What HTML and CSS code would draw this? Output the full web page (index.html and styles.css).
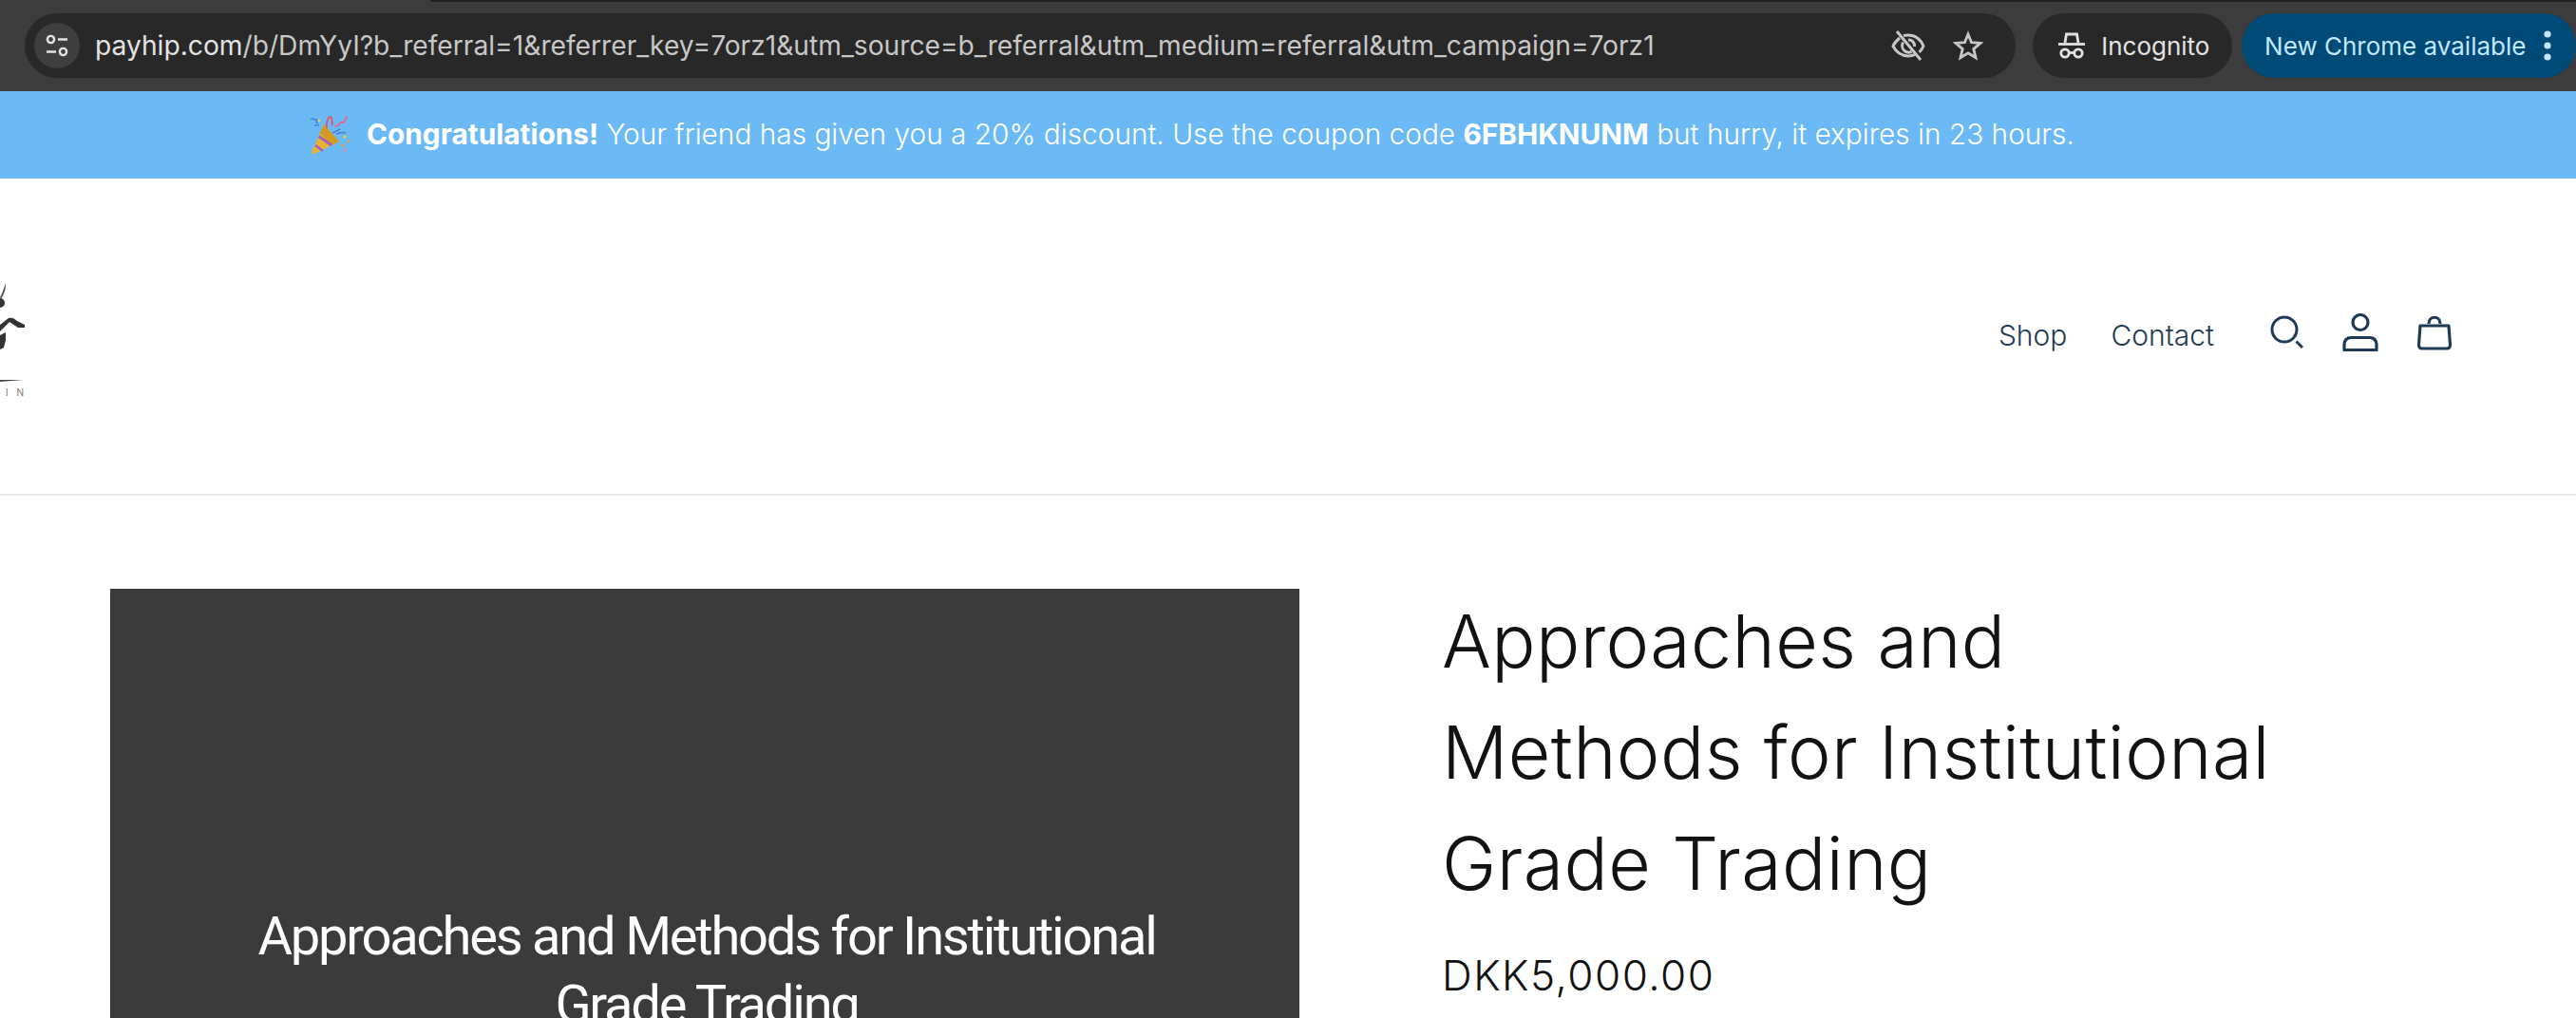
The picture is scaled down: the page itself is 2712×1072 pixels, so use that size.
FILE: index.html
```html
<!DOCTYPE html>
<html lang="en">
<head>
  <meta charset="UTF-8">
  <title>Approaches and Methods for Institutional Grade Trading</title>
  <link rel="stylesheet" href="styles.css">
</head>
<body>
  <div class="browser-bar">
    <div class="address-pill">
      <span class="tune-button">
        <svg width="28" height="28" viewBox="0 0 28 28" fill="none" stroke="#e3e3e3" stroke-width="2.4">
          <circle cx="7.5" cy="7.5" r="3.6"/>
          <path d="M15 7.5h10M3 20.500h10"/>
          <circle cx="20.500" cy="20.500" r="3.6"/>
        </svg>
      </span>
      <div class="url"><span class="url-host">payhip.com</span>/b/DmYyI?b_referral=1&amp;referrer_key=7orz1&amp;utm_source=b_referral&amp;utm_medium=referral&amp;utm_campaign=7orz1</div>
      <svg class="eye-icon" width="38" height="38" viewBox="0 0 38 38" fill="none" stroke="#c7c7c7" stroke-width="3">
        <path d="M10 11C6.500 14 4 17 3 19.500c3 6 9 10.500 16 10.500 3 0 5.500-.7 8-2"/>
        <path d="M14 8.500c1.600-.4 3.300-.6 5-.6 7 0 13 4.500 16 11.600-1 2.500-2.500 4.600-4.500 6.500"/>
        <path d="M13.500 15.500c-1.500 3-1 7 1.500 9s5 2 7.500 1M19 13c4-.3 7 3 6.500 7"/>
        <path d="M7 4l25 30"/>
      </svg>
      <svg class="star-icon" width="32" height="32" viewBox="0 0 36 36" fill="none" stroke="#c7c7c7" stroke-width="3.200" stroke-linejoin="miter">
        <path d="M18 4.500l4 9.800 10.600.8-8.100 6.900 2.500 10.300-9-5.500-9 5.500 2.500-10.300-8.100-6.900 10.600-.8z"/>
      </svg>
    </div>
    <div class="incognito-pill">
      <svg width="30" height="30" viewBox="0 0 30 30" fill="none" stroke="#e3e3e3" stroke-width="2.800">
        <path d="M8 12l1.500-9h11l1.500 9"/>
        <path d="M1 13.500h28"/>
        <circle cx="8" cy="23" r="4.200"/>
        <circle cx="22" cy="23" r="4.200"/>
        <path d="M12 22.500h6"/>
      </svg>
      <span>Incognito</span>
    </div>
    <div class="update-pill">
      <span>New Chrome available</span>
      <svg width="10" height="32" viewBox="0 0 10 32" fill="#c2e7ff">
        <circle cx="5" cy="4" r="3.600"/>
        <circle cx="5" cy="16" r="3.600"/>
        <circle cx="5" cy="28" r="3.600"/>
      </svg>
    </div>
  </div>

  <div class="promo-banner">
    <svg class="popper" width="44" height="44" viewBox="0 0 44 44">
      <path d="M15 11L31 29 5 42c-2 1-3-1-2.500-3z" fill="#e6b433"/>
      <path d="M15 11L31 29 22 33.500 11 20z" fill="#d39b22"/>
      <path d="M9.500 23.500L23 33M6 33l8 6" stroke="#a45fc4" stroke-width="2.800" fill="none"/>
      <path d="M1 6c3-3 4 1 6 0s-2 3 2 4M5 12l5 0" stroke="#4a7fe0" stroke-width="1.500" fill="none"/>
      <path d="M18 15c-1-8 2-12 4-12s1 5 2 9" stroke="#e4526f" stroke-width="1.800" fill="none"/>
      <path d="M27 14c1-4 3 0 4-3s1-2 4-2 2-6 5-6" stroke="#e8648c" stroke-width="1.800" fill="none"/>
      <path d="M24 20l8-4M28 21c3-1 6-2 10-1" stroke="#4a7fe0" stroke-width="1.800" fill="none"/>
      <circle cx="37" cy="24" r="1.500" fill="#f3d34a"/>
      <circle cx="35" cy="33" r="1.500" fill="#e8a33d"/>
      <circle cx="41" cy="29" r="1.400" fill="#e8a33d"/>
      <circle cx="37" cy="38" r="1.500" fill="#e78ac0"/>
      <circle cx="10" cy="7" r="1.300" fill="#f3d34a"/>
    </svg>
    <p class="promo-text"><strong>Congratulations!</strong> Your friend has given you a 20% discount. Use the coupon code <strong>6FBHKNUNM</strong> but hurry, it expires in 23 hours.</p>
  </div>

  <header class="site-header">
    <svg class="logo" width="28" height="126" viewBox="0 0 28 126">
      <path d="M0 18C3 13 4 8 6 3 6 9 5 14 1 20z" fill="#555"/>
      <circle cx="0" cy="24" r="5" fill="#333"/>
      <path d="M0 47L9 40c3-1 6 0 9 3l8 4 0 3-7 0-9-6L0 54z" fill="#333"/>
      <path d="M0 58l6-3 0 8-2 8-4 2z" fill="#333"/>
      <path d="M0 105h25l-25 2z" fill="#444"/>
      <text class="logo-text" x="6" y="122">I N</text>
    </svg>
    <nav class="site-nav">
      <a class="nav-link" href="#">Shop</a>
      <a class="nav-link" href="#">Contact</a>
      <div class="nav-icons">
        <svg width="36" height="36" viewBox="0 0 36 36" fill="none" stroke="#1f3a56" stroke-width="3">
          <circle cx="15" cy="15" r="13"/>
          <path d="M27.500 27.500l6.500 6.500"/>
        </svg>
        <svg width="38" height="40" viewBox="0 0 38 40" fill="none" stroke="#1f3a56" stroke-width="3.200">
          <circle cx="19" cy="9.500" r="8"/>
          <path d="M2 38.500v-6c0-4 3-7 7-7h20c4 0 7 3 7 7v6z" stroke-linejoin="round"/>
        </svg>
        <svg width="38" height="38" viewBox="0 0 38 38" fill="none" stroke="#1f3a56" stroke-width="3.200">
          <path d="M4 12h30l1.500 20c.1 2.500-1 4-3.500 4H6c-2.500 0-3.600-1.500-3.500-4z" stroke-linejoin="round"/>
          <path d="M13 10c0-9 12-9 12 0"/>
        </svg>
      </div>
    </nav>
  </header>

  <main class="product">
    <div class="product-cover">
      <div class="cover-title">Approaches and Methods for Institutional<br>Grade Trading</div>
    </div>
    <div class="product-info">
      <h1 class="product-title">Approaches and<br>Methods for Institutional<br>Grade Trading</h1>
      <div class="product-price">DKK5,000.00</div>
    </div>
  </main>
</body>
</html>
```
FILE: styles.css
```css
html, body {
  height: 1072px;
  overflow: hidden;
}

body {
  margin: 0;
  background-color: #fff;
  font-family: 'Inter', 'Open Sans', sans-serif;
  font-weight: 300;
}

/* browser chrome */
.browser-bar {
  display: flex;
  align-items: center;
  gap: 18px;
  height: 96px;
  box-sizing: border-box;
  padding: 14px 0 14px 26px;
  background-color: #3c3c3c;
  font-size: 26px;
  font-weight: 400;
  background-image: linear-gradient(#232323, #232323);
  background-repeat: no-repeat;
  background-size: calc(100% - 453px) 2px;
  background-position: right top;
}

.address-pill {
  display: flex;
  align-items: center;
  width: 2097px;
  height: 68px;
  box-sizing: border-box;
  padding: 0 0 0 10px;
  border-radius: 34px;
  background-color: #282828;
  color: #c7c7c7;
}

.tune-button {
  display: flex;
  align-items: center;
  justify-content: center;
  width: 48px;
  height: 48px;
  border-radius: 50%;
  background-color: #3f3f3f;
}

.url {
  flex: 1;
  margin-left: 16px;
  font-size: 28.2px;
  white-space: nowrap;
}

.url-host {
  color: #e3e3e3;
}

.eye-icon {
  margin-right: 28px;
}

.star-icon {
  margin-right: 34px;
}

.incognito-pill {
  display: flex;
  align-items: center;
  gap: 16px;
  width: 210px;
  height: 68px;
  box-sizing: border-box;
  padding-left: 26px;
  border-radius: 34px;
  background-color: #282828;
  color: #e3e3e3;
}

.update-pill {
  display: flex;
  align-items: center;
  justify-content: space-between;
  width: 352px;
  height: 68px;
  margin-left: -8px;
  box-sizing: border-box;
  padding: 0 25px 0 24px;
  border-radius: 34px;
  background-color: #004a77;
  color: #c2e7ff;
}

/* promo banner */
.promo-banner {
  display: flex;
  align-items: center;
  height: 92px;
  padding-left: 326px;
  background-color: #6cbaf5;
  color: #fff;
}

.popper {
  margin-right: 16px;
}

.promo-text {
  margin: 0 0 2px;
  font-size: 29.8px;
  white-space: nowrap;
}

.promo-text strong {
  font-weight: 700;
}

/* store header */
.site-header {
  display: flex;
  align-items: center;
  justify-content: space-between;
  height: 334px;
  box-sizing: border-box;
  padding-right: 130px;
  border-bottom: 2px solid #e8e8e8;
}

.logo {
  margin-top: 8px;
}

.logo-text {
  font-size: 10px;
  letter-spacing: 3px;
  fill: #555;
}

.site-nav {
  display: flex;
  align-items: center;
}

.nav-link {
  margin-right: 46px;
  margin-bottom: 2px;
  font-size: 30px;
  color: #1f3a56;
  text-decoration: none;
}

.nav-icons {
  display: flex;
  align-items: center;
  gap: 40px;
  margin-left: 13px;
  margin-bottom: 8px;
}

/* product */
.product {
  display: flex;
  gap: 150px;
  padding: 98px 0 0 116px;
}

.product-cover {
  flex: none;
  width: 1252px;
  height: 704px;
  box-sizing: border-box;
  padding: 330px 0 0 4px;
  background-color: #3b3b3b;
  font-weight: 400;
  text-align: center;
}

.cover-title {
  font-family: 'Roboto', sans-serif;
  font-size: 56px;
  line-height: 72px;
  letter-spacing: -2.2px;
  color: #fff;
}

.product-title {
  margin: -3px 0 0;
  font-size: 77px;
  font-weight: 350;
  line-height: 117px;
  letter-spacing: .4px;
  color: #121212;
  white-space: nowrap;
}

.product-price {
  margin-top: 32px;
  font-size: 44px;
  letter-spacing: 1.5px;
  color: #121212;
}
```
